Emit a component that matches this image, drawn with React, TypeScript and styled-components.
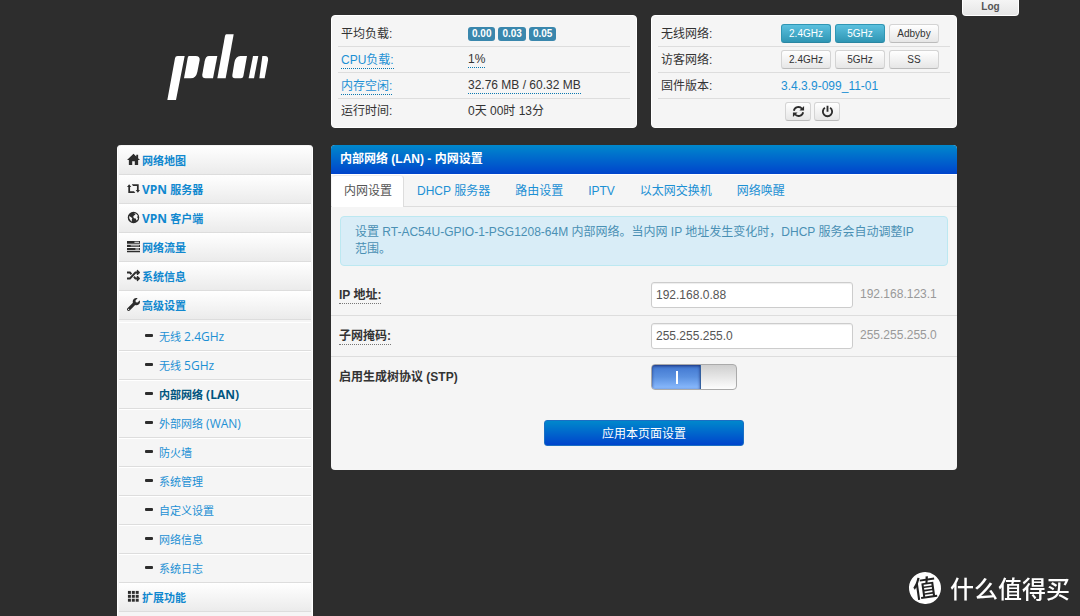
import React from "react";
import styled, { createGlobalStyle, css } from "styled-components";
import { FaRandom, FaWrench } from "react-icons/fa";

const GlobalStyle = createGlobalStyle`
  *, *::before, *::after { box-sizing: border-box; }
  body {
    margin: 0;
    background: #2d2d2d;
    color: #333;
    font: 12px/18px "Liberation Sans", "Noto Sans CJK SC", sans-serif;
  }
  a { color: #1c90d4; text-decoration: none; }
  button, input { font-family: inherit; margin: 0; }
  dl, dt, dd, ul, h1 { margin: 0; padding: 0; }
  ul { list-style: none; }
`;

const Page = styled.div`
  min-height: 100vh;
  display: flex;
  flex-direction: column;
  padding: 15px 6px 0 0;
`;

const Container = styled.div`
  position: relative;
  flex: 1;
  width: 100%;
  max-width: 840px;
  margin: 0 auto;
  display: flex;
  flex-direction: column;
  gap: 17px;
`;

const Columns = styled.div<{ $fill?: boolean }>`
  display: grid;
  grid-template-columns: 196px minmax(0, 1fr);
  column-gap: 18px;
  flex: ${(p) => (p.$fill ? "1" : "none")};
`;

const LogoLink = styled.a`
  display: block;
  padding: 19px 0 0 50px;
  svg { display: block; fill: #fff; }
`;

const Cards = styled.div`
  display: grid;
  grid-template-columns: 1fr 1fr;
  gap: 14px;
`;

const StatCard = styled.dl`
  padding: 5px 6px 4px;
  background: #f5f5f5;
  border: 1px solid #fff;
  border-radius: 4px;
`;

const StatRow = styled.div<{ $label: number }>`
  display: grid;
  grid-template-columns: ${(p) => p.$label}px 1fr;
  align-items: center;
  height: 26px;
  padding-left: 3px;
  border-bottom: 1px solid #ddd;
  &:last-child { height: 24px; border-bottom: 0; }
`;

const StatValue = styled.dd<{ $gap?: number; $indent?: boolean }>`
  display: flex;
  align-items: center;
  gap: ${(p) => p.$gap ?? 0}px;
  padding-left: ${(p) => (p.$indent ? 4 : 0)}px;
`;

const dotted = css`
  line-height: 16px;
  border-bottom: 1px dotted #0b78b0;
`;
const HintLink = styled.a`${dotted} display: inline-block;`;
const HintText = styled.span`${dotted}`;

const Badge = styled.span`
  padding: 0 4px;
  border-radius: 3px;
  background: #3a87ad;
  color: #fff;
  font-size: 10px;
  font-weight: bold;
  line-height: 14px;
`;

const SmallButton = styled.button<{ $on?: boolean; $icon?: boolean }>`
  display: flex;
  align-items: center;
  justify-content: center;
  width: ${(p) => (p.$icon ? 26 : 50)}px;
  height: 19px;
  padding: 0;
  border: 1px solid ${(p) => (p.$on ? "#2f96b4" : "#d4d4d4")};
  border-bottom-color: ${(p) => (p.$on ? "#2a86a2" : "#bbb")};
  border-radius: 3px;
  background: ${(p) => (p.$on ? "linear-gradient(#5bc0de, #2f96b4)" : "linear-gradient(#fff, #e6e6e6)")};
  color: ${(p) => (p.$on ? "#fff" : "#333")};
  font-size: 10px;
  line-height: 16px;
`;

const LogButton = styled.button`
  position: absolute;
  top: -15px;
  left: 100%;
  margin-left: 5px;
  width: 57px;
  height: 16px;
  padding: 0 0 2px;
  border: 1px solid #fff;
  border-top: 0;
  border-radius: 0 0 4px 4px;
  background: linear-gradient(#f5f5f5, #e6e6e6);
  color: #555;
  font-size: 10px;
  font-weight: bold;
  line-height: 12px;
`;

const Menu = styled.nav`
  padding: 1px 1px 0;
  background: #f5f5f5;
  border-radius: 4px 4px 0 0;
  border-left: 1px solid #fff;
  border-right: 1px solid #fff;
  overflow: hidden;
  font-family: "Open Sans", "Noto Sans CJK SC", sans-serif;
  font-size: 11px;
  white-space: pre;
`;

const Latin = styled.span`
  font-size: 12px;
`;

const MenuItem = styled.a`
  display: flex;
  align-items: center;
  gap: 2px;
  height: 29px;
  padding: 2px 0 0 8px;
  border-bottom: 1px solid #ddd;
  background: linear-gradient(#fff, #ebebeb);
  color: #1088cf;
  font-weight: bold;
  svg {
    flex: none;
    width: 13px;
    height: 13px;
    margin-bottom: 3px;
    color: #2d2d2d;
    fill: currentColor;
  }
`;

const SubMenu = styled.ul`
  padding-top: 2px;
`;

const SubItem = styled.a<{ $active?: boolean }>`
  display: flex;
  align-items: center;
  gap: 6px;
  height: 29px;
  padding-left: 26px;
  border-top: 1px solid #fff;
  border-bottom: 1px solid #ddd;
  color: ${(p) => (p.$active ? "#005580" : "#1c90d4")};
  font-weight: ${(p) => (p.$active ? "bold" : "normal")};
  &::before {
    content: "";
    width: 8px;
    height: 3px;
    margin-bottom: 2px;
    border-radius: 1px;
    background: #2d2d2d;
  }
`;

const Panel = styled.main`
  align-self: start;
  padding-bottom: 24px;
  background: #f5f5f5;
  border-radius: 4px;
  overflow: hidden;
`;

const PanelTitle = styled.h1`
  padding: 5px 9px 6px;
  background: linear-gradient(#0088cc, #0044cc);
  color: #fff;
  font-size: 12px;
  line-height: 18px;
`;

const Tabs = styled.nav`
  display: flex;
  gap: 1px;
  padding: 0 1px;
  border-top: 1px solid #fff;
  border-bottom: 1px solid #ddd;
`;

const Tab = styled.a<{ $active?: boolean }>`
  margin-bottom: -1px;
  padding: 6px 11px 7px;
  border: 1px solid ${(p) => (p.$active ? "#ddd" : "transparent")};
  border-left-color: transparent;
  border-top-color: ${(p) => (p.$active ? "#eee" : "transparent")};
  border-bottom: 0;
  border-radius: 4px 4px 0 0;
  background: ${(p) => (p.$active ? "#fff" : "none")};
  color: ${(p) => (p.$active ? "#555" : "#1c90d4")};
  line-height: 18px;
`;

const Info = styled.p`
  margin: 9px;
  padding: 7px 26px 7px 14px;
  border: 1px solid #bce8f1;
  border-radius: 4px;
  background: #d9edf7;
  color: #4a90b4;
  line-height: 17px;
`;

const FormRow = styled.div`
  display: grid;
  grid-template-columns: 312px 202px 1fr;
  align-items: center;
  padding: 7px 8px;
  border-bottom: 1px solid #ddd;
  &:last-of-type { border-bottom: 0; }
`;

const FieldLabel = styled.label<{ $hint?: boolean }>`
  justify-self: start;
  font-weight: bold;
  line-height: 16px;
  border-bottom: 1px dotted ${(p) => (p.$hint ? "#777" : "transparent")};
`;

const TextInput = styled.input`
  width: 100%;
  height: 26px;
  padding: 0 4px 1px;
  border: 1px solid #ccc;
  border-radius: 3px;
  background: #fff;
  box-shadow: inset 0 1px 1px rgba(0, 0, 0, 0.075);
  color: #555;
  font-size: 12px;
`;

const Hint = styled.span`
  padding: 0 0 2px 7px;
  color: #999;
`;

const Toggle = styled.input`
  appearance: none;
  display: flex;
  width: 86px;
  height: 26px;
  border: 1px solid #aaa;
  border-radius: 4px;
  overflow: hidden;
  background: linear-gradient(#cfcfcf, #fdfdfd);
  &::before {
    content: "";
    width: 49px;
    border-right: 1px solid #34609f;
    background:
      linear-gradient(#fff, #fff) 24px 6px / 2px 13px no-repeat,
      linear-gradient(#3f75cf, #5b91e0 50%, #8cbcff);
    box-shadow: inset 0 1px 3px rgba(0, 0, 60, 0.6);
  }
`;

const ApplyButton = styled.button`
  display: block;
  width: 200px;
  height: 26px;
  margin: 23px auto 0;
  padding: 0 0 2px;
  border: 1px solid #1a6fc4;
  border-radius: 3px;
  background: linear-gradient(#0088cc, #0044cc);
  color: #fff;
  font-size: 12px;
`;

const Watermark = styled.div`
  position: fixed;
  right: 10px;
  bottom: 12px;
  display: flex;
  align-items: center;
  gap: 9px;
  color: #fff;
  font-family: "Noto Sans CJK SC", sans-serif;
  font-size: 24px;
  font-weight: 500;
  line-height: 32px;
`;

const Seal = styled.span`
  width: 32px;
  height: 32px;
  border-radius: 50%;
  background: #fff;
  color: #222;
  text-align: center;
  font-size: 24px;
  line-height: 30px;
  transform: rotate(-8deg);
`;

const Logo = () => (
  <svg width="102" height="66" viewBox="50 42 306 198" aria-label="pdcn">
    <path d="M82 108h21L77 240H51L74 115q1-7 8-7z" />
    <path d="M116 108h20q13 0 12 12l-7 36q-4 19-20 19h-20l11-61q1-6 4-6z" />
    <path d="M176 108h25l-13 67h-22q-12 0-10-12l7-39q3-16 13-16z" />
    <path d="M228 43h22l-24 132h-25l23-127q1-5 4-5z" />
    <path d="M270 108h20l-11 61q-1 6-7 6h-18q-9 0-8-10l6-37q4-20 18-20z" />
    <path d="M308 108h16l-13 67h-16z" />
    <path d="M336 108h8q11 0 9 13l-10 54h-16z" />
  </svg>
);

const HomeIcon = () => (
  <svg viewBox="0 0 14 14">
    <path d="M7 .8L0 7.6h2V13h3.6V9h2.8v4H12V7.6h2l-2-2V2h-2v1.7z" />
  </svg>
);

const RetweetIcon = () => (
  <svg viewBox="0 0 14 14">
    <path d="M0 5.5L2.3 2.5l2.3 3H3.3V10h4.2l1.4 1.8H1.4V5.5z" />
    <path d="M14 8.7l-2.3 3-2.3-3h1.3V4.3H6.5L5.1 2.4h7.5v6.3z" />
  </svg>
);

const GlobeIcon = () => (
  <svg viewBox="0 0 14 14">
    <path
      fillRule="evenodd"
      d="M7 .8a6.2 6.2 0 1 0 0 12.4A6.2 6.2 0 0 0 7 .8zM7.8 2.2l2.3.9 1.6 2-.8 1.6.9 1.2-.6 1.6-1 .6-.8-2-1.9-.3-.8-1.6.9-1.6 1.6-.3-.7-1zM2.4 5.4l2 1.4 1.3 1-.6 1.5.3 2.2-1.6-1.2-1.4-2.4z"
    />
  </svg>
);

const TasksIcon = () => (
  <svg viewBox="0 0 14 14">
    <path fillRule="evenodd" d="M0 1h14v3H0zM8 2v1h5V2zM0 5h14v2.6H0zM4 5.8v1h9v-1zM0 8.6h14v2.2H0zM9 9.2v1h4v-1zM0 11.6h14v1.6H0z" />
  </svg>
);

const GridIcon = () => (
  <svg viewBox="0 0 14 14">
    {[1, 5.2, 9.4].map((y) =>
      [1, 5.2, 9.4].map((x) => <rect key={`${x}-${y}`} x={x} y={y} width="3.2" height="3.2" />)
    )}
  </svg>
);

const RefreshIcon = () => (
  <svg width="13" height="13" viewBox="0 0 14 14" fill="none" stroke="#2d2d2d" strokeWidth="2">
    <path d="M2 6.2A5 5 0 0 1 10.8 4M12 7.8A5 5 0 0 1 3.2 10" />
    <path d="M13 1v5H8zM1 13V8h5z" fill="#2d2d2d" stroke="none" />
  </svg>
);

const PowerIcon = () => (
  <svg width="13" height="13" viewBox="0 0 14 14" fill="none" stroke="#2d2d2d" strokeWidth="2">
    <path d="M4.2 3A5 5 0 1 0 9.8 3M7 .8v6.4" />
  </svg>
);

/* Latin runs in the menu are set one size larger than the Chinese text. */
const MenuText = ({ children }: { children: string }) => (
  <span>
    {children
      .split(/([ -~]+)/)
      .filter(Boolean)
      .map((run, i) => (/^[ -~]/.test(run) ? <Latin key={i}>{run}</Latin> : run))}
  </span>
);

const menu = [
  { label: "网络地图", icon: <HomeIcon /> },
  { label: "VPN 服务器", icon: <RetweetIcon /> },
  { label: "VPN 客户端", icon: <GlobeIcon /> },
  { label: "网络流量", icon: <TasksIcon /> },
  { label: "系统信息", icon: <FaRandom /> },
  { label: "高级设置", icon: <FaWrench /> },
];

const subMenu = [
  "无线 2.4GHz", "无线 5GHz", "内部网络 (LAN)", "外部网络 (WAN)", "防火墙",
  "系统管理", "自定义设置", "网络信息", "系统日志",
];

const tabs = ["内网设置", "DHCP 服务器", "路由设置", "IPTV", "以太网交换机", "网络唤醒"];

export default function App() {
  return (
    <Page>
      <GlobalStyle />
      <Container>
        <LogButton type="button">Log</LogButton>
        <Columns as="header">
          <LogoLink href="#"><Logo /></LogoLink>
          <Cards>
            <StatCard>
              <StatRow $label={127}>
                <dt>平均负载:</dt>
                <StatValue $gap={3}>
                  <Badge>0.00</Badge><Badge>0.03</Badge><Badge>0.05</Badge>
                </StatValue>
              </StatRow>
              <StatRow $label={127}>
                <dt><HintLink href="#">CPU负载:</HintLink></dt>
                <StatValue><HintText>1%</HintText></StatValue>
              </StatRow>
              <StatRow $label={127}>
                <dt><HintLink href="#">内存空闲:</HintLink></dt>
                <StatValue><HintText>32.76 MB / 60.32 MB</HintText></StatValue>
              </StatRow>
              <StatRow $label={127}>
                <dt>运行时间:</dt>
                <StatValue>0天 00时 13分</StatValue>
              </StatRow>
            </StatCard>
            <StatCard>
              <StatRow $label={120}>
                <dt>无线网络:</dt>
                <StatValue $gap={4}>
                  <SmallButton type="button" $on>2.4GHz</SmallButton>
                  <SmallButton type="button" $on>5GHz</SmallButton>
                  <SmallButton type="button">Adbyby</SmallButton>
                </StatValue>
              </StatRow>
              <StatRow $label={120}>
                <dt>访客网络:</dt>
                <StatValue $gap={4}>
                  <SmallButton type="button">2.4GHz</SmallButton>
                  <SmallButton type="button">5GHz</SmallButton>
                  <SmallButton type="button">SS</SmallButton>
                </StatValue>
              </StatRow>
              <StatRow $label={120}>
                <dt>固件版本:</dt>
                <StatValue><a href="#">3.4.3.9-099_11-01</a></StatValue>
              </StatRow>
              <StatRow $label={120}>
                <dt />
                <StatValue $gap={3} $indent>
                  <SmallButton type="button" $icon aria-label="重启"><RefreshIcon /></SmallButton>
                  <SmallButton type="button" $icon aria-label="关机"><PowerIcon /></SmallButton>
                </StatValue>
              </StatRow>
            </StatCard>
          </Cards>
        </Columns>
        <Columns $fill>
          <Menu>
            {menu.map((m) => (
              <MenuItem key={m.label} href="#">{m.icon}<MenuText>{m.label}</MenuText></MenuItem>
            ))}
            <SubMenu>
              {subMenu.map((label) => (
                <li key={label}>
                  <SubItem href="#" $active={label === "内部网络 (LAN)"}>
                    <MenuText>{label}</MenuText>
                  </SubItem>
                </li>
              ))}
            </SubMenu>
            <MenuItem href="#"><GridIcon /><MenuText>扩展功能</MenuText></MenuItem>
          </Menu>
          <Panel>
            <PanelTitle>内部网络 (LAN) - 内网设置</PanelTitle>
            <Tabs>
              {tabs.map((t, i) => (
                <Tab key={t} href="#" $active={i === 0}>{t}</Tab>
              ))}
            </Tabs>
            <Info>设置 RT-AC54U-GPIO-1-PSG1208-64M 内部网络。当内网 IP 地址发生变化时，DHCP 服务会自动调整IP范围。</Info>
            <form>
              <FormRow>
                <FieldLabel htmlFor="ip" $hint>IP 地址:</FieldLabel>
                <TextInput id="ip" type="text" defaultValue="192.168.0.88" />
                <Hint>192.168.123.1</Hint>
              </FormRow>
              <FormRow>
                <FieldLabel htmlFor="mask" $hint>子网掩码:</FieldLabel>
                <TextInput id="mask" type="text" defaultValue="255.255.255.0" />
                <Hint>255.255.255.0</Hint>
              </FormRow>
              <FormRow>
                <FieldLabel htmlFor="stp">启用生成树协议 (STP)</FieldLabel>
                <Toggle id="stp" type="checkbox" defaultChecked />
              </FormRow>
              <ApplyButton type="button">应用本页面设置</ApplyButton>
            </form>
          </Panel>
        </Columns>
      </Container>
      <Watermark><Seal>值</Seal>什么值得买</Watermark>
    </Page>
  );
}
